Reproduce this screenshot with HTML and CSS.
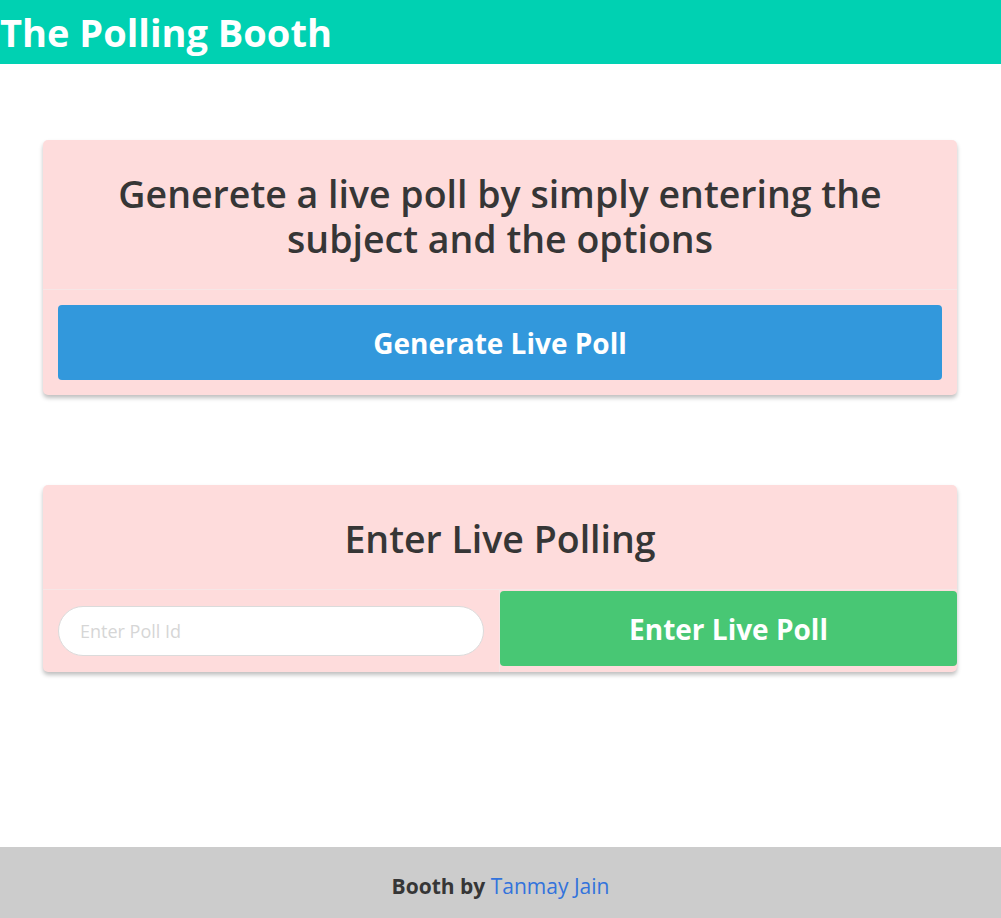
FILE: index.html
```html
<!DOCTYPE html>
<html lang="en">
<head>
<meta charset="utf-8">
<title>The Polling Booth</title>
<link rel="stylesheet" href="styles.css">
</head>
<body>
<header class="topbar">
  <h1 class="brand">The Polling Booth</h1>
</header>
<main class="content">
  <section class="card">
    <div class="card-head">
      <h2 class="card-title">Generete a live poll by simply entering the subject and the options</h2>
    </div>
    <div class="card-foot">
      <button class="btn btn-blue">Generate Live Poll</button>
    </div>
  </section>
  <section class="card">
    <div class="card-head">
      <h2 class="card-title">Enter Live Polling</h2>
    </div>
    <div class="card-foot split">
      <div class="foot-item foot-input">
        <input class="poll-input" type="text" placeholder="Enter Poll Id">
      </div>
      <div class="foot-item foot-btn">
        <button class="btn btn-green">Enter Live Poll</button>
      </div>
    </div>
  </section>
</main>
<footer class="bottombar">
  <p class="credit"><strong>Booth by</strong> <a href="#" class="author">Tanmay Jain</a></p>
</footer>
</body>
</html>
```
FILE: styles.css
```css
* { box-sizing: border-box; }
html, body { margin: 0; padding: 0; }
body {
  font-family: "Open Sans", "Noto Sans", "Liberation Sans", sans-serif;
  color: #363636;
  min-height: 100vh;
  display: flex;
  flex-direction: column;
  background: #fff;
}
.topbar {
  background: #00d1b2;
  height: 64px;
  display: flex;
  align-items: center;
}
.brand {
  margin: 0;
  color: #fff;
  font-size: 38px;
  font-weight: 700;
  line-height: 1;
}
.content {
  flex: 1;
  padding: 76px 44px 0 43px;
  display: flex;
  flex-direction: column;
  gap: 90px;
}
.card {
  background: #fedcdc;
  border-radius: 5px;
  box-shadow: 0 3px 4px rgba(0, 0, 0, 0.25);
}
.card-head {
  padding: 31px 60px 28px;
  border-bottom: 1px solid #f6e6e6;
}
.card-title {
  margin: 0;
  text-align: center;
  font-size: 37.5px;
  font-weight: 600;
  line-height: 45px;
  color: #363636;
}
.card-foot { padding: 15px; }
.card-foot.split {
  padding: 0;
  display: flex;
}
.foot-item {
  width: 50%;
  flex: none;
}
.foot-input {
  padding: 16px 15px;
  border-right: 1px solid #f6e6e6;
}
.foot-btn {
  padding: 1px 0 6px;
}
.btn {
  display: block;
  width: 100%;
  height: 75px;
  border: none;
  border-radius: 4px;
  color: #fff;
  font-family: inherit;
  font-size: 28px;
  font-weight: 700;
  cursor: pointer;
}
.btn-blue { background: #3298dc; }
.btn-green { background: #48c774; }
.poll-input {
  display: block;
  width: 100%;
  height: 50px;
  border: 1px solid #dbdbdb;
  border-radius: 25px;
  background: #fff;
  padding: 0 21px;
  font-family: inherit;
  font-size: 18px;
  color: #363636;
}
.poll-input::placeholder { color: #d6d6d6; }
.bottombar {
  background: #cccccc;
  height: 71px;
  display: flex;
  align-items: center;
  justify-content: center;
  padding-top: 6px;
}
.credit {
  margin: 0;
  font-size: 21px;
  color: #363636;
}
.credit strong { font-weight: 700; }
.author {
  color: #3273dc;
  text-decoration: none;
}
```
